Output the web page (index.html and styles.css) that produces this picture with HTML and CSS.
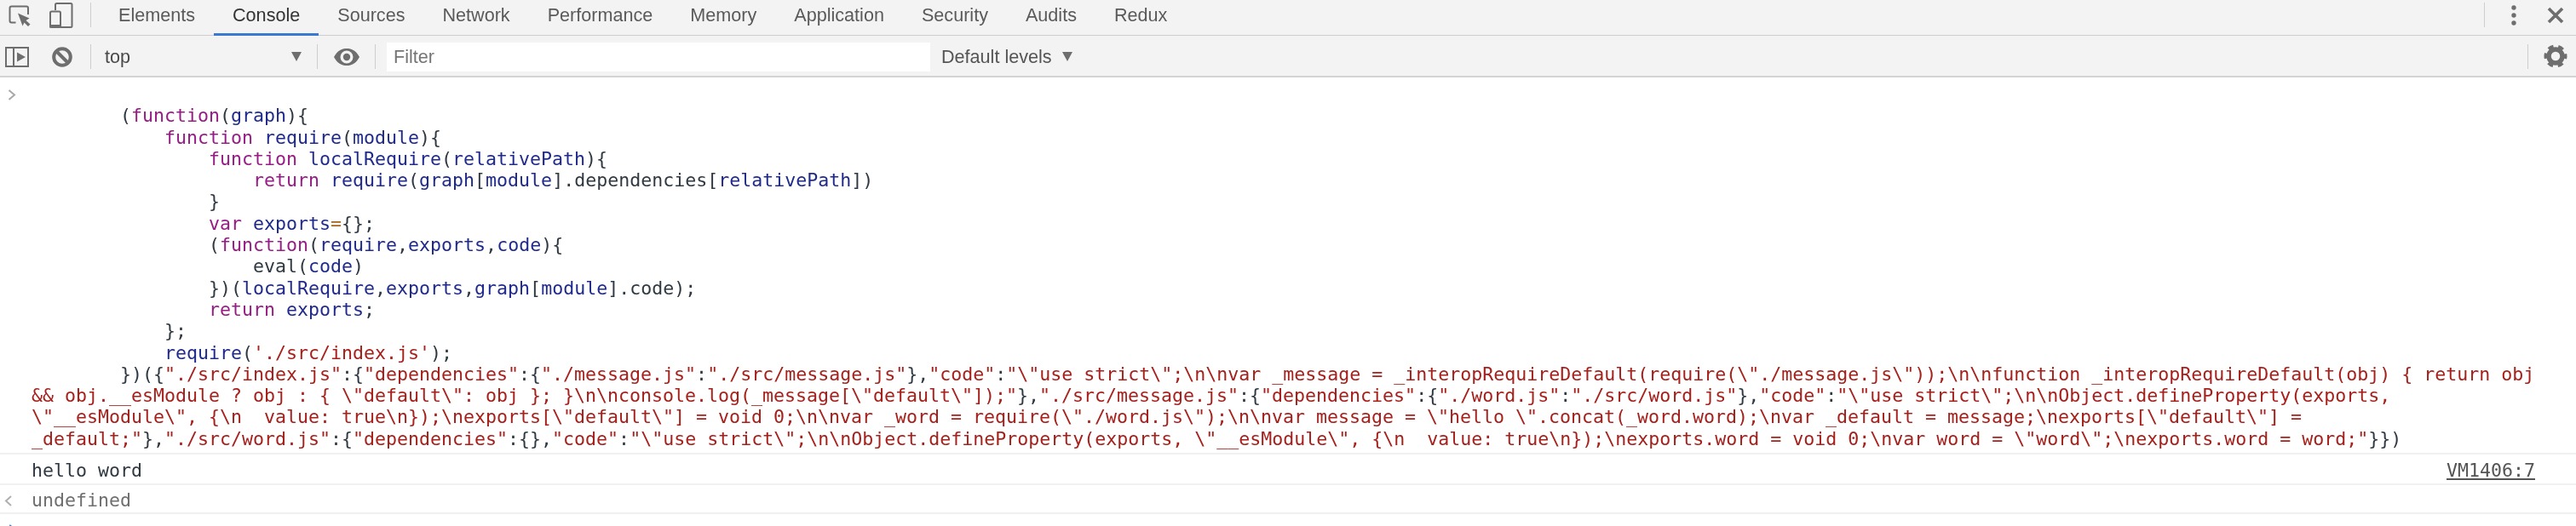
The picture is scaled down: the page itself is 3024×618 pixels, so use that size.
FILE: index.html
```html
<!DOCTYPE html>
<html lang="en">
<head>
<meta charset="utf-8">
<title>DevTools Console</title>
<link rel="stylesheet" href="styles.css">
</head>
<body>
<header class="tabbar">
  <svg class="icon inspect" width="36" height="36" viewBox="0 0 36 36"><path class="line" d="M11.500 26.500H6.500A2 2 0 0 1 4.500 24.500V9.500A2 2 0 0 1 6.500 7.500H24A2 2 0 0 1 26 9.500V17"/><path class="fill" d="M14 15.500L27.500 21.500L23.500 24L28.500 28.500L26 31L21.500 26.500L19.500 30.500Z"/></svg>
  <svg class="icon device" width="30" height="32" viewBox="0 0 30 32"><path class="line" d="M8 10V3.500A1.500 1.500 0 0 1 9.500 2H26A1.500 1.500 0 0 1 27.500 3.500V28.500A1.500 1.500 0 0 1 26 30H14"/><rect class="line" x="2" y="11.500" width="12" height="18.500" rx="1.500"/><rect class="fill" x="1" y="27" width="14" height="3.500"/></svg>
  <span class="sep sep-tabs"></span>
  <nav class="tabs">
    <span class="tab">Elements</span>
    <span class="tab active">Console</span>
    <span class="tab">Sources</span>
    <span class="tab">Network</span>
    <span class="tab">Performance</span>
    <span class="tab">Memory</span>
    <span class="tab">Application</span>
    <span class="tab">Security</span>
    <span class="tab">Audits</span>
    <span class="tab">Redux</span>
  </nav>
  <span class="sep sep-end"></span>
  <svg class="icon dots" width="12" height="30" viewBox="0 0 12 30"><circle class="fill" cx="6" cy="6" r="2.700"/><circle class="fill" cx="6" cy="15" r="2.700"/><circle class="fill" cx="6" cy="24" r="2.700"/></svg>
  <svg class="icon close" width="22" height="22" viewBox="0 0 22 22"><path class="x" d="M3 3L19 19M19 3L3 19"/></svg>
</header>
<section class="toolbar">
  <svg class="icon sidebar" width="28" height="24" viewBox="0 0 28 24"><rect class="line" x="1" y="1" width="26" height="22"/><path class="line" d="M10 1V23"/><path class="fill" d="M14 6.500L24 12L14 17.500Z"/></svg>
  <svg class="icon clear" width="26" height="26" viewBox="0 0 26 26"><circle class="thick" cx="13" cy="13" r="9.800"/><path class="thick" d="M6 6L20 20"/></svg>
  <span class="sep sep-clear"></span>
  <div class="context"><span>top</span><i class="caret caret-top"></i></div>
  <span class="sep"></span>
  <svg class="icon eye" width="30" height="22" viewBox="0 0 30 22"><path class="fill" fill-rule="evenodd" d="M0 11C4 3.500 9 1 15 1S26 3.500 30 11C26 18.500 21 21 15 21S4 18.500 0 11ZM15 3.500A7.500 7.500 0 1 0 15 18.500A7.500 7.500 0 1 0 15 3.500Z"/><circle class="fill" cx="15" cy="11" r="4.200"/></svg>
  <span class="sep sep-eye"></span>
  <div class="filter">Filter</div>
  <div class="levels"><span>Default levels</span><i class="caret"></i></div>
  <span class="sep sep-gear"></span>
  <svg class="icon gear" width="28" height="28" viewBox="0 0 28 28"><circle class="gear-body" cx="14" cy="14" r="8"/><circle class="gear-teeth" cx="14" cy="14" r="11"/></svg>
</section>
<main class="console">
<div class="row command"><svg class="chevron" width="10" height="13" viewBox="0 0 10 13"><path d="M1.500 1L8 6.500L1.500 12"/></svg><pre class="msg">

        (<b class="k">function</b>(<b class="v">graph</b>){
            <b class="k">function</b> <b class="v">require</b>(<b class="v">module</b>){
                <b class="k">function</b> <b class="v">localRequire</b>(<b class="v">relativePath</b>){
                    <b class="k">return</b> <b class="v">require</b>(<b class="v">graph</b>[<b class="v">module</b>].dependencies[<b class="v">relativePath</b>])
                }
                <b class="k">var</b> <b class="v">exports</b><b class="o">=</b>{};
                (<b class="k">function</b>(<b class="v">require</b>,<b class="v">exports</b>,<b class="v">code</b>){
                    eval(<b class="v">code</b>)
                })(<b class="v">localRequire</b>,<b class="v">exports</b>,<b class="v">graph</b>[<b class="v">module</b>].code);
                <b class="k">return</b> <b class="v">exports</b>;
            };
            <b class="v">require</b>(<b class="s">'./src/index.js'</b>);
        })({<b class="s">"./src/index.js"</b>:{<b class="s">"dependencies"</b>:{<b class="s">"./message.js"</b>:<b class="s">"./src/message.js"</b>},<b class="s">"code"</b>:<b class="s">"\"use strict\";\n\nvar _message = _interopRequireDefault(require(\"./message.js\"));\n\nfunction _interopRequireDefault(obj) { return obj &amp;&amp; obj.__esModule ? obj : { \"default\": obj }; }\n\nconsole.log(_message[\"default\"]);"</b>},<b class="s">"./src/message.js"</b>:{<b class="s">"dependencies"</b>:{<b class="s">"./word.js"</b>:<b class="s">"./src/word.js"</b>},<b class="s">"code"</b>:<b class="s">"\"use strict\";\n\nObject.defineProperty(exports, \"__esModule\", {\n  value: true\n});\nexports[\"default\"] = void 0;\n\nvar _word = require(\"./word.js\");\n\nvar message = \"hello \".concat(_word.word);\nvar _default = message;\nexports[\"default\"] = _default;"</b>},<b class="s">"./src/word.js"</b>:{<b class="s">"dependencies"</b>:{},<b class="s">"code"</b>:<b class="s">"\"use strict\";\n\nObject.defineProperty(exports, \"__esModule\", {\n  value: true\n});\nexports.word = void 0;\nvar word = \"word\";\nexports.word = word;"</b>}})</pre></div>
<div class="row log"><pre class="msg">hello word</pre><a class="source">VM1406:7</a></div>
<div class="row result"><svg class="chevron back" width="10" height="13" viewBox="0 0 10 13"><path d="M8 1L2 6.500L8 12"/></svg><pre class="msg">undefined</pre></div>
<div class="row prompt"><svg class="chevron active" width="10" height="13" viewBox="0 0 10 13"><path d="M1.500 1L8 6.500L1.500 12"/></svg></div>
</main>
</body>
</html>
```
FILE: styles.css
```css
* { box-sizing: border-box; }
html, body { margin: 0; height: 100%; overflow: hidden; background: #fff; }
body { font-family: "Liberation Sans", Arial, sans-serif; font-size: 21.6px; color: #5a5a5a; filter: blur(0.4px); }

.tabbar {
  display: flex; align-items: center; height: 42px;
  background: #f3f3f3; box-shadow: inset 0 -1px #cdcdcd;
}
.toolbar {
  display: flex; align-items: center; height: 49px;
  background: #f3f3f3; border-bottom: 2px solid #d4d4d4; padding-top: 3px;
}

.icon { flex: none; display: block; }
.line { fill: none; stroke: #6e6e6e; stroke-width: 2; }
.fill { fill: #6e6e6e; }
.thick { fill: none; stroke: #6e6e6e; stroke-width: 4; }
.x { fill: none; stroke: #6e6e6e; stroke-width: 3.600; }
.gear-body { fill: none; stroke: #6e6e6e; stroke-width: 5.500; }
.gear-teeth { fill: none; stroke: #6e6e6e; stroke-width: 5; stroke-dasharray: 6 5.520; stroke-dashoffset: 3; }

.inspect { margin: 0 0 7px 7px; }
.device { margin: 0 0 7px 14px; }
.sep { flex: none; width: 1px; height: 29px; background: #cecece; }
.sep-tabs { margin: 0 0 7px 19px; }
.sep-end { margin: 0 0 7px auto; }
.dots { margin: 0 0 7px 28px; }
.close { margin: 0 13px 7px 32px; }

.tabs { display: flex; margin-left: 10px; }
.tab { height: 42px; padding: 3px 22px 0; line-height: 29px; color: #5a5a5a; }
.active { color: #333; border-bottom: 3px solid #3a78d4; }

.sidebar { margin-left: 6px; }
.clear { margin-left: 26px; }
.sep-clear { margin-left: 20px; }
.sep-clear, .toolbar .sep { margin-bottom: 2px; }
.context { display: flex; align-items: center; width: 265px; padding: 0 18px 0 16px; justify-content: space-between; color: #4a4a4a; }
.caret { display: block; width: 0; height: 0; margin-bottom: 2px; border-left: 6px solid transparent; border-right: 6px solid transparent; border-top: 11px solid #6e6e6e; }
.eye { margin-left: 19px; }
.sep-eye { margin-left: 18px; }
.filter {
  width: 638px; height: 34px; margin-left: 13px; padding-left: 8px;
  background: #fff; line-height: 34px; color: #757575;
}
.levels { display: flex; align-items: center; gap: 12px; margin-left: 13px; color: #555; }
.sep-gear { margin-left: auto; }
.gear { margin: 0 10px 2px 18px; }

.console { font-family: "DejaVu Sans Mono", "Liberation Mono", monospace; font-size: 21.6px; line-height: 25.300px; color: #303942; }
.row { position: relative; padding: 0 20px 0 37px; border-bottom: 2px solid #f0f0f0; }
.command { padding-top: 7px; padding-bottom: 4px; }
.log { display: flex; justify-content: space-between; height: 36px; padding-top: 6px; padding-right: 48px; }
.result { height: 34px; padding-top: 5px; }
.prompt { height: 20px; border: 0; }
.msg { margin: 0; font: inherit; white-space: pre-wrap; }
.log .msg { flex: 1; }
b { font-weight: normal; }
.k { color: #971c85; }
.v { color: #1f2a8c; }
.o { color: #a8631a; }
.s { color: #a6201c; }
.source { color: #545454; text-decoration: underline; }
.result .msg { color: #6f6f6f; }

.chevron { position: absolute; left: 9px; top: 14px; fill: none; stroke: #a8a8a8; stroke-width: 2; }
.back { top: 12px; left: 5px; stroke: #b0b0b0; }
.active.chevron { top: 12px; stroke: #3a78d4; }
```
